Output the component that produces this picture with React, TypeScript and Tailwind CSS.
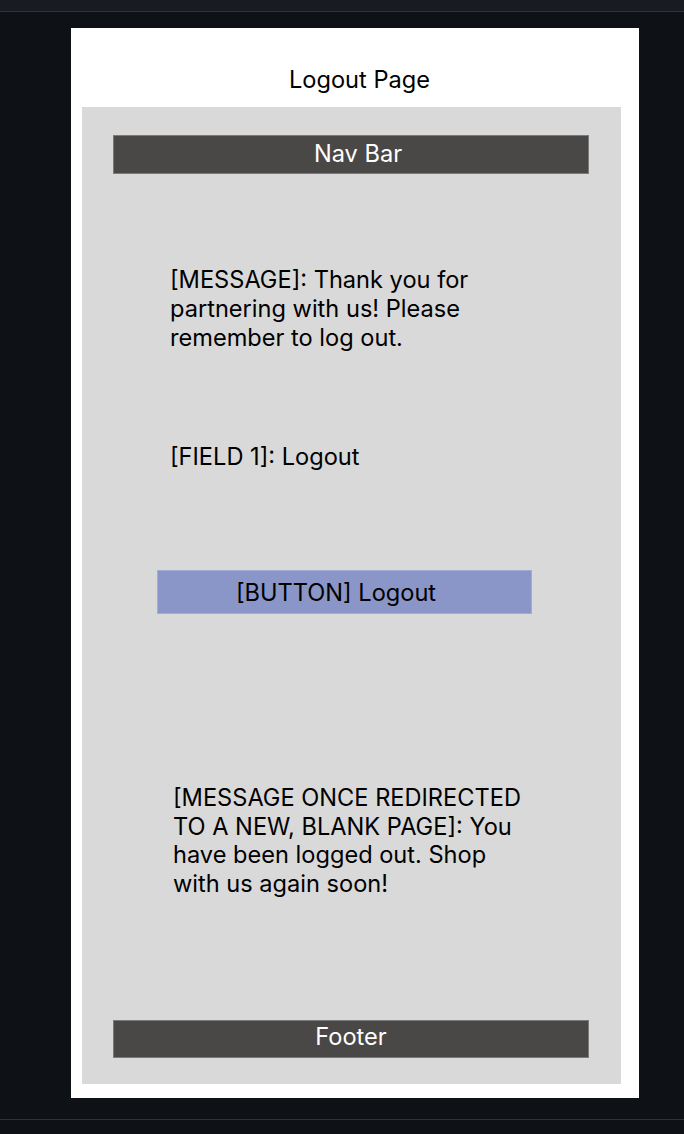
export default function App() {
  const font = { fontFamily: "Inter, 'Noto Sans', sans-serif" };
  return (
    <div className="w-[684px] h-[1134px] bg-[#0e1115] flex flex-col" style={font}>
      <div className="h-[11px] bg-[#181b22] border-b border-[#30333a] box-content" />
      <div className="ml-[71px] mt-[16px] w-[568px] h-[1070px] bg-white flex flex-col pl-[11px] pr-[18px] pb-[14px]">
        <div className="h-[79px] flex items-center justify-center pt-[24px] pl-[16px] text-[23.6px] text-black">
          Logout Page
        </div>
        <div className="flex-1 bg-[#d9d9d9] flex flex-col pt-[28px]">
          <div className="ml-[31px] w-[476px] h-[39px] bg-[#4a4846] border border-[#7a7a7a] flex items-center justify-center pl-[14px] pb-[1px] text-white text-[23.6px]">
            Nav Bar
          </div>
          <p className="ml-[88px] mt-[91px] w-[330px] text-[23.6px] leading-[29px] text-black">
            [MESSAGE]: Thank you for partnering with us! Please remember to log out.
          </p>
          <p className="ml-[88px] mt-[90px] text-[23.6px] leading-[29px] text-black">
            [FIELD 1]: Logout
          </p>
          <div className="ml-[75px] mt-[99px] w-[375px] h-[44px] bg-[#8a95c8] border border-[#a3acd6] flex items-center justify-center pr-[17px] pt-[2px] text-[23.6px] text-black">
            [BUTTON] Logout
          </div>
          <p className="ml-[91px] mt-[170px] w-[356px] text-[23.6px] leading-[28.7px] text-black">
            [MESSAGE ONCE REDIRECTED TO A NEW, BLANK PAGE]: You have been logged out. Shop with us again soon!
          </p>
          <div className="flex-1" />
          <div className="ml-[31px] mb-[26px] w-[476px] h-[38px] bg-[#4a4846] border border-[#7a7a7a] flex items-center justify-center pb-[5px] text-white text-[23.6px]">
            Footer
          </div>
        </div>
      </div>
      <div className="mt-[21px] border-t border-[#30333a]" />
    </div>
  );
}
